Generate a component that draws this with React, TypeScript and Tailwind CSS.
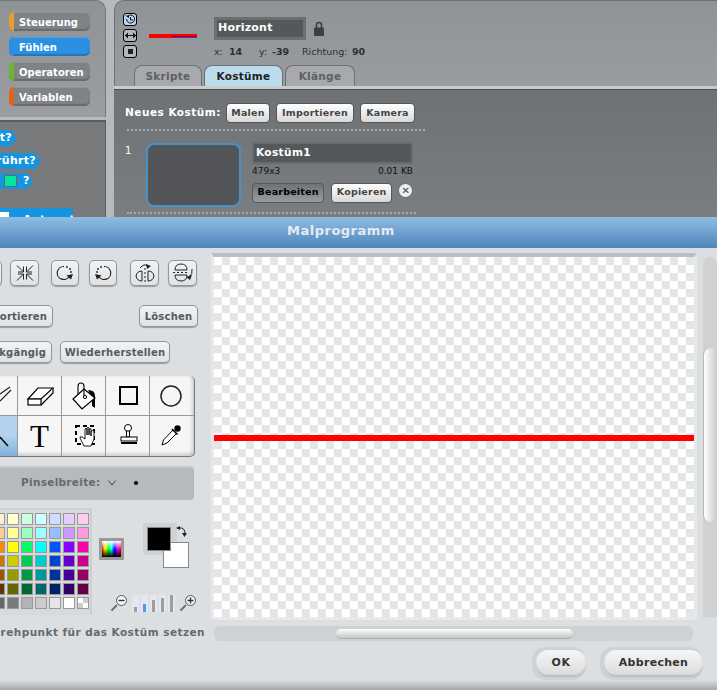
import type { ReactNode } from "react";

const paletteRows = [
  ["#ffeed6", "#ffffcc", "#ccffdd", "#ccffff", "#ccddff", "#e6ccff", "#ffccee"],
  ["#ffcc99", "#ffff99", "#99ffbb", "#99ffff", "#99bbff", "#cc99ff", "#ff99dd"],
  ["#ff8800", "#ffff00", "#00ff66", "#00ffff", "#0055ff", "#8800ff", "#ff00aa"],
  ["#cc7700", "#cccc00", "#00cc55", "#00cccc", "#0044cc", "#6600cc", "#cc0088"],
  ["#995500", "#999900", "#009944", "#009999", "#003399", "#440099", "#990066"],
  ["#663300", "#666600", "#006633", "#006666", "#002266", "#330066", "#660044"],
  ["#666666", "#7a7a7a", "#b3b3b3", "#cccccc", "#e6e6e6", "#ffffff", "checker"],
];

const Category = ({ label, color, active }: { label: string; color: string; active?: boolean }) => (
  <div
    className={`w-[81px] h-[19px] rounded-[5px] flex overflow-hidden shadow-[inset_0_-2px_1px_rgba(0,0,0,0.18),inset_0_1px_0_rgba(255,255,255,0.15)] ${
      active ? "bg-[#2b8fe2]" : "bg-[#7f8286]"
    }`}
  >
    <div className="w-[5px] shrink-0" style={{ backgroundColor: color }} />
    <span className="pl-[5px] pt-[1px] text-[10px] leading-[19px] font-bold text-white">{label}</span>
  </div>
);

const PanelButton = ({ label, w, dark }: { label: string; w: string; dark?: boolean }) => (
  <div
    className={`${w} h-[20px] rounded-[4px] border border-[#55585a] flex items-center justify-center text-[9.5px] font-bold tracking-[0.2px] ${
      dark
        ? "bg-gradient-to-b from-[#6f7173] to-[#9a9c9e] text-black"
        : "bg-gradient-to-b from-[#ffffff] to-[#d8d8d8] text-[#444]"
    }`}
  >
    {label}
  </div>
);

const DialogButton = ({ className, label }: { className: string; label: string }) => (
  <div
    className={`${className} h-[22px] shrink-0 rounded-[5px] border border-[#94979a] bg-gradient-to-b from-[#f2f3f4] to-[#dfe1e3] shadow-[0_1px_1px_rgba(0,0,0,0.3)] flex items-center justify-center text-[10px] font-bold text-[#555a5e] tracking-[0.2px] whitespace-nowrap`}
  >
    {label}
  </div>
);

const IconButton = ({ className, children }: { className: string; children?: ReactNode }) => (
  <div
    className={`${className} h-[26px] rounded-[5px] border border-[#94979a] bg-gradient-to-b from-[#f2f3f4] to-[#dfe1e3] shadow-[0_1px_1px_rgba(0,0,0,0.3)] shrink-0 flex items-center justify-center`}
  >
    {children}
  </div>
);

const RotateIcon = ({ flip }: { flip?: boolean }) => (
  <svg width="20" height="18" viewBox="0 0 20 18" className={flip ? "-scale-x-100" : ""}>
    <path d="M9 2.5 A6.5 6.5 0 1 0 14.5 12" fill="none" stroke="#222" strokeWidth="1.2" />
    <path d="M11.5 11.5 L18 10 L16 15.5 Z" fill="#222" />
    <circle cx="12" cy="3" r="0.9" fill="#222" />
    <circle cx="15" cy="5" r="0.9" fill="#222" />
    <circle cx="16" cy="8" r="0.9" fill="#222" />
  </svg>
);

const Tool = ({ children, active, last, bottom }: { children?: ReactNode; active?: boolean; last?: boolean; bottom?: boolean }) => (
  <div
    className={`overflow-hidden ${last ? "" : "border-r border-[#999]"} ${bottom ? "" : "border-b border-[#999]"} ${
      active ? "bg-gradient-to-b from-[#b2d2ef] via-[#b2d2ef] to-[#7fb0d8]" : ""
    }`}
  >
    {children}
  </div>
);

const Bar = ({ h, active }: { h: string; active?: boolean }) => (
  <div className="w-[7px] h-[17px] flex items-end justify-center bg-[#e6e7ee]">
    <div className={`w-[3px] ${h} ${active ? "bg-[#4a9bee]" : "bg-[#9b9ea1]"}`} />
  </div>
);

const Glass = ({ plus }: { plus?: boolean }) => (
  <svg width="19" height="18" viewBox="0 0 19 18" className="shrink-0">
    <path d="M1.5 16.5 L7 11" stroke="#6e7174" strokeWidth="2" />
    <circle cx="11.5" cy="6.5" r="5" fill="#f4f4f4" stroke="#55585a" />
    <path d="M8.5 6.5 H14.5" stroke="#333" strokeWidth="1.4" />
    {plus && <path d="M11.5 3.5 V9.5" stroke="#333" strokeWidth="1.4" />}
  </svg>
);

const ToolIcon = ({ children }: { children: ReactNode }) => (
  <svg width="44" height="40" viewBox="0 0 44 40">
    {children}
  </svg>
);

export default function App() {
  return (
    <div className="w-[717px] h-[690px] overflow-hidden flex flex-col bg-[#dcdfe2] font-['DejaVu_Sans',sans-serif]">
      {/* scratch window behind the dialog */}
      <div className="h-[217px] shrink-0 flex bg-[#b7babd] overflow-hidden">
        <div className="w-[106px] shrink-0 flex flex-col">
          <div className="h-[117px] bg-gradient-to-b from-[#8f9396] to-[#9b9ea1] rounded-tr-[10px] border-t border-r border-[#75787b] pl-[9px] pt-[11px] flex flex-col gap-[6px]">
            <Category label="Steuerung" color="#e5a02c" />
            <Category label="Fühlen" color="#2b8fe2" active />
            <Category label="Operatoren" color="#6cb52c" />
            <Category label="Variablen" color="#e0641c" />
          </div>
          <div className="mt-[3px] flex-1 bg-[#787a7c] border-t-2 border-r border-[#5c5f61] overflow-hidden text-white font-bold text-[11px] tracking-[0.3px]">
            <div className="mt-[8px] w-[17px] h-[16px] bg-[#1594e0] [clip-path:polygon(0_0,11px_0,100%_50%,11px_100%,0_100%)] flex justify-end items-center pr-[5px] whitespace-nowrap">
              t?
            </div>
            <div className="mt-[7px] w-[41px] h-[16px] bg-[#1594e0] [clip-path:polygon(0_0,35px_0,100%_50%,35px_100%,0_100%)] flex justify-end items-center pr-[5px] whitespace-nowrap">
              rührt?
            </div>
            <div className="mt-[4px] w-[33px] h-[16px] bg-[#1594e0] [clip-path:polygon(0_0,27px_0,100%_50%,27px_100%,0_100%)] flex items-center pl-[4px] gap-[6px]">
              <div className="w-[13px] h-[12px] bg-[#00e8a0] border border-[#667]" />
              <span>?</span>
            </div>
            <div className="mt-[19px] w-[73px] h-[20px] bg-[#1594e0] rounded-tr-[3px] flex pt-[4px] gap-[14px]">
              <div className="w-[9px] h-[12px] bg-white shrink-0" />
              <span className="leading-[10px] mt-[3px]">Antwort</span>
            </div>
          </div>
        </div>

        <div className="ml-[8px] flex-1 flex flex-col overflow-hidden">
          <div className="h-[86px] shrink-0 rounded-tl-[10px] border-t border-l border-[#6e7174] bg-gradient-to-b from-[#8f9396] to-[#9a9da0] pl-[8px] pt-[12px] relative">
            <div className="flex">
              <div className="w-[14px] flex flex-col gap-[3px] shrink-0">
                <div className="h-[13px] rounded-[3px] border border-black bg-[#b9d3f2] flex items-center justify-center">
                  <svg width="11" height="11" viewBox="0 0 11 11">
                    <path d="M3 2 A4 4 0 1 1 1.6 5" fill="none" stroke="#111" />
                    <path d="M0 1.5 H4 V4 Z" fill="#111" />
                    <path d="M5.5 3 V6 H8" fill="none" stroke="#111" />
                  </svg>
                </div>
                <div className="h-[13px] rounded-[3px] border border-black bg-[#b4b6b8] flex items-center justify-center">
                  <svg width="11" height="7" viewBox="0 0 11 7">
                    <path d="M0 3.5 H11" stroke="#111" />
                    <path d="M3 0.5 L0 3.5 L3 6.5 Z M8 0.5 L11 3.5 L8 6.5 Z" fill="#111" />
                  </svg>
                </div>
                <div className="h-[13px] rounded-[3px] border border-black bg-[#b4b6b8] flex items-center justify-center">
                  <div className="w-[5px] h-[5px] bg-[#222]" />
                </div>
              </div>
              <div className="ml-[12px] mt-[21px] w-[48px] h-[4px] bg-[#ff0000] shrink-0 relative">
                <div className="absolute left-[23px] top-[2px] w-[25px] h-px bg-[#1010d0]" />
              </div>
              <div className="ml-[17px] mt-[4px]">
                <div className="flex items-center">
                  <div className="w-[92px] h-[23px] bg-[#55585a] border-[3px] border-[#6c6f71] text-white font-bold text-[11px] tracking-[0.2px] leading-[16px] pl-[1px]">
                    Horizont
                  </div>
                  <svg className="ml-[8px]" width="10" height="15" viewBox="0 0 10 15">
                    <path d="M2.5 7 V4 a2.5 2.5 0 0 1 5 0 V7" fill="none" stroke="#3c3e40" strokeWidth="1.6" />
                    <rect x="0" y="6.5" width="10" height="8.5" rx="1" fill="#3c3e40" />
                  </svg>
                </div>
                <div className="mt-[5px] flex items-baseline text-[9.5px] text-[#2d2f31] whitespace-nowrap">
                  <span className="w-[15px]">x:</span>
                  <span className="w-[30px] font-bold">14</span>
                  <span className="w-[13px]">y:</span>
                  <span className="w-[30px] font-bold">-39</span>
                  <span className="w-[50px]">Richtung:</span>
                  <span className="font-bold">90</span>
                </div>
              </div>
            </div>
            <div className="absolute left-[19px] bottom-0 flex gap-[2px] text-[10.5px] font-bold tracking-[0.3px]">
              <div className="w-[68px] h-[21px] rounded-t-[8px] border-t border-x border-[#6e7174] bg-[#a7a9ae] text-[#5e6064] flex items-center justify-center pt-[1px]">
                Skripte
              </div>
              <div className="w-[79px] h-[21px] rounded-t-[8px] border-t border-x border-[#6e7174] bg-[#bcdcee] text-[#222] flex items-center justify-center pt-[1px]">
                Kostüme
              </div>
              <div className="w-[70px] h-[21px] rounded-t-[8px] border-t border-x border-[#6e7174] bg-[#a7a9ae] text-[#5e6064] flex items-center justify-center pt-[1px]">
                Klänge
              </div>
            </div>
          </div>
          <div className="h-[4px] shrink-0 bg-[#c9cccf] border-b border-[#4d5052]" />
          <div className="flex-1 bg-gradient-to-b from-[#6f7274] to-[#7b7e80] pl-[11px] pt-[13px]">
            <div className="flex items-center">
              <span className="w-[101px] text-[10.5px] font-bold text-white tracking-[0.5px] whitespace-nowrap">Neues Kostüm:</span>
              <div className="flex gap-[6px]">
                <PanelButton label="Malen" w="w-[44px]" />
                <PanelButton label="Importieren" w="w-[78px]" />
                <PanelButton label="Kamera" w="w-[55px]" />
              </div>
            </div>
            <div className="mt-[6px] ml-[2px] w-[298px] border-t-2 border-dotted border-[#a8abad]" />
            <div className="mt-[12px] flex">
              <span className="w-[21px] text-[10px] text-white">1</span>
              <div className="w-[95px] h-[64px] rounded-[8px] border-2 border-[#4a90c8] bg-[#535558] shrink-0" />
              <div className="ml-[11px] w-[161px] -mt-[1px]">
                <div className="h-[22px] bg-[#55585a] border-2 border-[#696c6e] text-white font-bold text-[10.5px] tracking-[0.4px] leading-[17px] pl-[2px]">
                  Kostüm1
                </div>
                <div className="mt-[1px] flex justify-between text-[9px] text-[#111]">
                  <span>479x3</span>
                  <span>0.01 KB</span>
                </div>
                <div className="mt-[4px] flex items-center">
                  <PanelButton label="Bearbeiten" w="w-[73px]" dark />
                  <div className="ml-[7px]">
                    <PanelButton label="Kopieren" w="w-[61px]" />
                  </div>
                  <div className="ml-[6px] -mt-[4px] w-[15px] h-[15px] rounded-full border border-[#666] bg-[#eee] flex items-center justify-center text-[10px] font-bold text-[#444] leading-none">
                    ✕
                  </div>
                </div>
              </div>
            </div>
            <div className="mt-[5px] ml-[2px] w-[289px] border-t-2 border-dotted border-[#a8abad]" />
          </div>
        </div>
      </div>

      {/* paint editor dialog */}
      <div className="h-[31px] shrink-0 bg-gradient-to-b from-[#8fbce3] to-[#4f86ba] pl-[287px] pb-[3px] flex items-center text-[13px] font-bold text-[#e4ebf2] tracking-[0.5px]">
        Malprogramm
      </div>
      <div className="h-[432px] shrink-0 flex">
        {/* tools */}
        <div className="w-[211px] shrink-0 overflow-hidden">
          <div className="mt-[12px] h-[26px] flex">
            <IconButton className="w-[20px] -ml-[18px]" />
            <IconButton className="w-[29px] ml-[8px]">
              <svg width="20" height="18" viewBox="0 0 20 18">
                <path
                  d="M2 1.5 L8 7.5 M8.5 2.5 V8 H3 M18 1.5 L12 7.5 M11.5 2.5 V8 H17 M2 16.5 L8 10.5 M8.5 15.5 V10 H3 M18 16.5 L12 10.5 M11.5 15.5 V10 H17"
                  fill="none"
                  stroke="#222"
                  strokeWidth="1"
                />
              </svg>
            </IconButton>
            <IconButton className="w-[28px] ml-[12px]">
              <RotateIcon />
            </IconButton>
            <IconButton className="w-[28px] ml-[10px]">
              <RotateIcon flip />
            </IconButton>
            <IconButton className="w-[29px] ml-[13px]">
              <svg width="22" height="20" viewBox="0 0 22 20">
                <path d="M8 8 Q3 8 2 13 Q3 18 8 18 Z M14 8 Q19 8 20 13 Q19 18 14 18 Z" fill="none" stroke="#222" />
                <path d="M11 5 V19" stroke="#222" strokeDasharray="2 2" />
                <path d="M6 5 Q10 0 14 3" fill="none" stroke="#222" />
                <path d="M12 1 L17 3 L13 6 Z" fill="#222" />
              </svg>
            </IconButton>
            <IconButton className="w-[29px] ml-[9px]">
              <svg width="22" height="20" viewBox="0 0 22 20">
                <path d="M3 7 Q3 1 9 1 Q15 1 15 7 Z M3 12 Q3 18 9 18 Q15 18 15 12 Z" fill="none" stroke="#222" />
                <path d="M1 9.5 H17" stroke="#222" strokeDasharray="2 2" />
                <path d="M20 6 Q21 11 17 14" fill="none" stroke="#222" />
                <path d="M20 12 L18 17 L14 14 Z" fill="#222" />
              </svg>
            </IconButton>
          </div>

          <div className="mt-[19px] w-[198px] flex justify-between">
            <DialogButton className="w-[81px] -ml-[28px]" label="Importieren" />
            <DialogButton className="w-[59px]" label="Löschen" />
          </div>
          <div className="mt-[14px] flex">
            <DialogButton className="w-[80px] -ml-[28px]" label="Rückgängig" />
            <DialogButton className="w-[110px] ml-[8px]" label="Wiederherstellen" />
          </div>

          <div className="mt-[13px] -ml-[26px] w-[221px] h-[81px] grid grid-cols-[repeat(5,44px)] grid-rows-[repeat(2,40px)] rounded-r-[5px] border-r border-b border-[#777] bg-[#f6f6f6] shadow-[inset_0_-3px_3px_rgba(0,0,0,0.12),inset_-3px_0_3px_rgba(0,0,0,0.1)] overflow-hidden">
            <Tool>
              <ToolIcon>
                <path d="M26 18 L36 11 M26 25 L37 14" stroke="#222" strokeWidth="1.2" fill="none" />
              </ToolIcon>
            </Tool>
            <Tool>
              <ToolIcon>
                <path d="M10 23 L20 12 H35 L23 23 Z" fill="#fff" stroke="#000" strokeWidth="1.2" />
                <rect x="10" y="23" width="13" height="6" fill="#fff" stroke="#000" strokeWidth="1.2" />
                <path d="M35 12 V17 L23 29" fill="#fff" stroke="#000" strokeWidth="1.2" />
              </ToolIcon>
            </Tool>
            <Tool>
              <ToolIcon>
                <path d="M26 14 Q33 14 33 20 V32 L30 30 V22 Z" fill="#000" />
                <path d="M11 23 L22 13 L33 22 L20 33 Z" fill="#fff" stroke="#000" strokeWidth="1.2" />
                <path d="M16 18 V10 a3 3 0 0 1 6 0 V20" fill="none" stroke="#000" strokeWidth="1.1" />
                <circle cx="23" cy="21" r="1.6" fill="#fff" stroke="#000" />
              </ToolIcon>
            </Tool>
            <Tool>
              <ToolIcon>
                <rect x="14" y="11" width="17" height="17" fill="none" stroke="#000" strokeWidth="2" />
              </ToolIcon>
            </Tool>
            <Tool last>
              <ToolIcon>
                <circle cx="21" cy="20" r="10" fill="none" stroke="#222" strokeWidth="1.5" />
              </ToolIcon>
            </Tool>
            <Tool active bottom>
              <ToolIcon>
                <path d="M26 21 L34 30" stroke="#111" strokeWidth="1.6" />
              </ToolIcon>
            </Tool>
            <Tool bottom>
              <div className="h-full flex items-center justify-center font-['Liberation_Serif',serif] text-[31px] leading-none text-black">
                T
              </div>
            </Tool>
            <Tool bottom>
              <ToolIcon>
                <rect x="14" y="10" width="18" height="18" fill="none" stroke="#000" strokeWidth="2" strokeDasharray="4 3" />
                <path
                  d="M22 30 L18 22 Q18 20 20 21 L23 23 V13 Q24 11.5 25 13 V19 V12 Q26 11 27 12 V19 V13 Q28 12 29 13 V20 V15 Q31 14 32 15 V23 L29 30 Z"
                  fill="#fff"
                  stroke="#000"
                  strokeWidth="0.9"
                />
              </ToolIcon>
            </Tool>
            <Tool bottom>
              <ToolIcon>
                <circle cx="22" cy="12" r="3.5" fill="#fff" stroke="#000" />
                <path d="M20.5 15 H23.5 V21 H20.5 Z" fill="#fff" stroke="#000" />
                <rect x="15" y="21" width="16" height="4" fill="#fff" stroke="#000" />
                <rect x="15" y="26" width="16" height="2" fill="#000" />
              </ToolIcon>
            </Tool>
            <Tool last bottom>
              <ToolIcon>
                <path d="M12 29 L13.5 24 L23 14 L26.5 17.5 L17 27 Z" fill="#fff" stroke="#000" />
                <path d="M22 13 L27.5 18.5" stroke="#000" strokeWidth="1.6" />
                <circle cx="27.5" cy="12.5" r="3.2" fill="#000" />
              </ToolIcon>
            </Tool>
          </div>

          <div className="mt-[9px] w-[194px] h-[34px] rounded-r-[4px] bg-[#b5babd] border-t-2 border-[#c6c9cc] flex items-center pl-[21px] pb-[2px] text-[10.5px] font-bold text-[#666a6e] tracking-[0.3px]">
            <span className="w-[87px] whitespace-nowrap">Pinselbreite:</span>
            <svg width="8" height="6" viewBox="0 0 8 6">
              <path d="M0.5 0.5 L4 5 L7.5 0.5" fill="none" stroke="#444" />
            </svg>
            <div className="ml-[18px] w-[4px] h-[4px] rounded-full bg-black" />
          </div>

          <div className="mt-[8px] h-[107px] flex">
            <div className="w-[92px] h-[107px] shrink-0 bg-[#d7dadd] border-t-2 border-r-2 border-[#cdd0d3] overflow-hidden pt-[3px] flex flex-col gap-[2px]">
              {paletteRows.map((row, i) => (
                <div key={i} className="flex gap-[2px] -ml-[7px]">
                  {row.map((c, j) =>
                    c === "checker" ? (
                      <div
                        key={j}
                        className="w-[12px] h-[12px] shrink-0 border border-[#999] bg-[conic-gradient(#cccccc_25%,#ffffff_25%_50%,#cccccc_50%_75%,#ffffff_75%)]"
                      />
                    ) : (
                      <div key={j} className="w-[12px] h-[12px] shrink-0 border border-[#999]" style={{ backgroundColor: c }} />
                    )
                  )}
                </div>
              ))}
            </div>
            <div className="flex flex-col">
              <div className="h-[63px] pt-[15px] flex">
                <div className="ml-[7px] mt-[15px] w-[25px] h-[22px] border-[3px] border-[#999] bg-[linear-gradient(#ffffff,transparent,#000000),linear-gradient(90deg,#ff0000,#ffff00,#00ff00,#00ffff,#0000ff,#ff00ff,#ff0000)]" />
                <div className="ml-[19px] w-[48px] h-[48px] relative">
                  <div className="absolute left-0 top-0 w-[34px] h-[32px] bg-[#cfd2d5] rounded-[2px]" />
                  <div className="absolute left-[20px] top-[19px] w-[26px] h-[26px] bg-white border border-[#888]" />
                  <div className="absolute left-[4px] top-[4px] w-[24px] h-[24px] bg-black border border-[#888]" />
                  <svg className="absolute left-[33px] top-[3px]" width="12" height="11" viewBox="0 0 12 11">
                    <path d="M3 2 Q9 1 9 8" fill="none" stroke="#222" />
                    <path d="M0 2 L4 0 V4 Z M6 7 H11 L8.5 11 Z" fill="#222" />
                  </svg>
                </div>
              </div>
              <div className="mt-[23px] ml-[18px] flex items-center">
                <Glass />
                <div className="ml-[3px] flex gap-[2px]">
                  <Bar h="h-[5px]" />
                  <Bar h="h-[8px]" active />
                  <Bar h="h-[12px]" />
                  <Bar h="h-[14px]" />
                  <Bar h="h-[17px]" />
                </div>
                <div className="ml-[4px]">
                  <Glass plus />
                </div>
              </div>
            </div>
          </div>

          <div className="mt-[10px] h-[14px] flex justify-end pr-[6px] text-[10.5px] leading-[14px] font-bold text-[#666a6e] tracking-[0.45px] whitespace-nowrap">
            Drehpunkt für das Kostüm setzen
          </div>
        </div>

        {/* canvas, scrollbars and dialog buttons */}
        <div className="flex-1 flex flex-col">
          <div className="flex">
            <div className="mt-[5px] w-[486px] h-[367px] shrink-0 border-t-4 border-t-[#bcbfc2] border-x-[3px] border-x-[#e6e8ea] border-b-[3px] border-b-[#e6e8ea]">
              <div className="w-[480px] h-[360px] pt-[178px] bg-[conic-gradient(#e5e5e5_25%,#ffffff_25%_50%,#e5e5e5_50%_75%,#ffffff_75%)] bg-[length:16px_16px]">
                <div className="h-[6px] bg-[#ff0000]" />
              </div>
            </div>
            <div className="ml-[6px] mt-[9px] w-[14px] h-[360px] rounded-t-[7px] bg-[#cfd1d3] pt-[91px]">
              <div className="h-[174px] rounded-[7px] bg-gradient-to-r from-[#ffffff] to-[#c9cbcd] border-l border-[#b4b7ba]" />
            </div>
          </div>
          <div className="mt-[6px] ml-[3px] w-[479px] h-[15px] rounded-[6px] bg-[#cfd1d3] pt-[3px]">
            <div className="ml-[122px] w-[237px] h-[10px] rounded-full bg-gradient-to-b from-[#ffffff] to-[#c4c6c8] border-b border-[#aeb1b3]" />
          </div>
          <div className="mt-[6px] pr-[14px] flex justify-end gap-[14px]">
            <div className="w-[54px] h-[33px] rounded-[14px] bg-[#cfd2d5] pl-[4px] pt-[3px]">
              <div className="h-[27px] rounded-[12px] bg-gradient-to-b from-[#f6f6f6] to-[#dadada] shadow-[inset_0_-2px_2px_rgba(0,0,0,0.15)] flex items-center justify-center text-[11px] font-bold text-[#333] tracking-[0.5px]">
                OK
              </div>
            </div>
            <div className="w-[103px] h-[33px] rounded-[14px] bg-[#cfd2d5] pl-[4px] pt-[3px]">
              <div className="h-[27px] rounded-[12px] bg-gradient-to-b from-[#f6f6f6] to-[#dadada] shadow-[inset_0_-2px_2px_rgba(0,0,0,0.15)] flex items-center justify-center text-[11px] font-bold text-[#333] tracking-[0.3px]">
                Abbrechen
              </div>
            </div>
          </div>
        </div>
      </div>
      <div className="h-[10px] shrink-0 bg-gradient-to-b from-[#dcdfe2] to-[#a4a7aa]" />
    </div>
  );
}
